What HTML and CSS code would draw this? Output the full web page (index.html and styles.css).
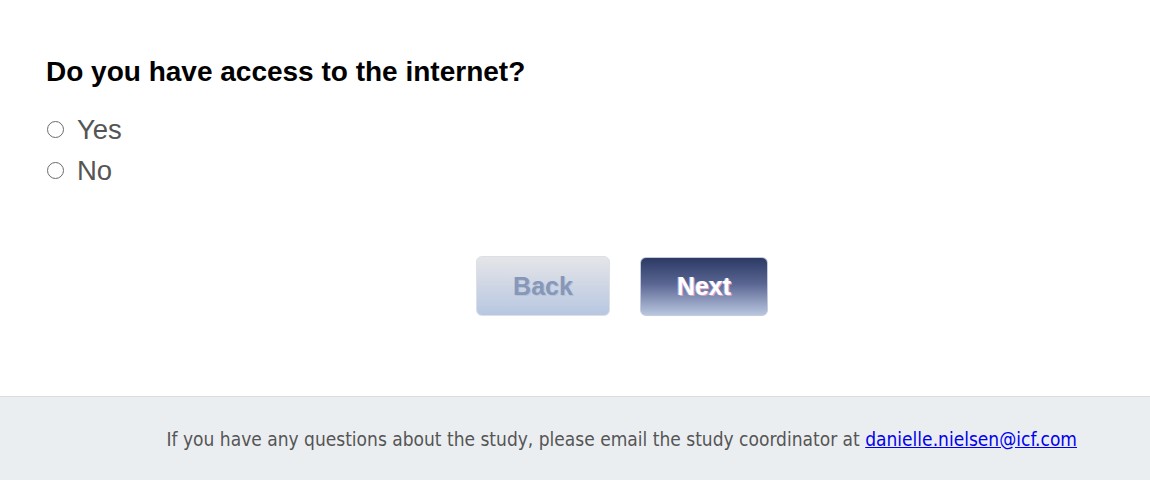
FILE: index.html
```html
<!DOCTYPE html>
<html>
<head>
<meta charset="utf-8">
<link rel="stylesheet" href="styles.css">
</head>
<body>
<main class="survey">
  <h1 class="question">Do you have access to the internet?</h1>
  <div class="options">
    <label class="option"><input type="radio" name="internet"><span>Yes</span></label>
    <label class="option"><input type="radio" name="internet"><span>No</span></label>
  </div>
  <div class="nav">
    <button class="btn btn-back">Back</button>
    <button class="btn btn-next">Next</button>
  </div>
</main>
<footer class="footer">
  <p>If you have any questions about the study, please email the study coordinator at <a href="#">danielle.nielsen@icf.com</a></p>
</footer>
</body>
</html>
```
FILE: styles.css
```css
html, body {
  margin: 0;
  padding: 0;
  background: #fff;
}
body {
  font-family: "Liberation Sans", Arial, sans-serif;
}
.survey {
  height: 396px;
  padding: 0 46px;
  box-sizing: border-box;
  display: flex;
  flex-direction: column;
}
.question {
  margin: 56px 0 0;
  font-size: 28px;
  line-height: 32px;
  font-weight: bold;
  color: #000;
}
.options {
  margin-top: 21px;
  display: flex;
  flex-direction: column;
}
.option {
  display: flex;
  align-items: center;
  height: 41px;
  font-size: 27.5px;
  color: #555;
}
.option input {
  appearance: none;
  -webkit-appearance: none;
  width: 17px;
  height: 17px;
  margin: 0 13px 0 1px;
  border: 1.5px solid #6b6b6b;
  border-radius: 50%;
  box-sizing: border-box;
  background: #fff;
}
.nav {
  margin-top: 65px;
  display: flex;
  gap: 30px;
  padding-left: 430px;
}
.btn {
  height: 60px;
  border-radius: 6px;
  font-family: "Liberation Sans", Arial, sans-serif;
  font-weight: bold;
  font-size: 25px;
  padding: 0;
  cursor: pointer;
}
.btn-back {
  width: 134px;
  border: 1px solid #dcdfe6;
  background: linear-gradient(#e5e5e8, #b7c7e1);
  color: #8797b7;
  text-shadow: 1px 1px 0 #b5c2d8;
}
.btn-next {
  width: 128px;
  margin-top: 1px;
  height: 59px;
  border: 1px solid #c3cbdc;
  background: linear-gradient(#2d3965, #5a6692 45%, #b9c6e0);
  color: #fff;
  text-shadow: 1px 1px 0 #d8a0c0, -1px 0 0 #9fb0e0;
}
.footer {
  height: 84px;
  border-top: 1px solid #d9dde0;
  background: #ebeef1;
  box-sizing: border-box;
  display: flex;
  align-items: center;
  justify-content: flex-end;
  padding-right: 73px;
}
.footer p {
  margin: 0;
  font-family: "DejaVu Sans Condensed", "DejaVu Sans", sans-serif;
  font-size: 19px;
  color: #555;
}
.footer a {
  color: #0000ee;
  text-decoration: underline;
}
```
